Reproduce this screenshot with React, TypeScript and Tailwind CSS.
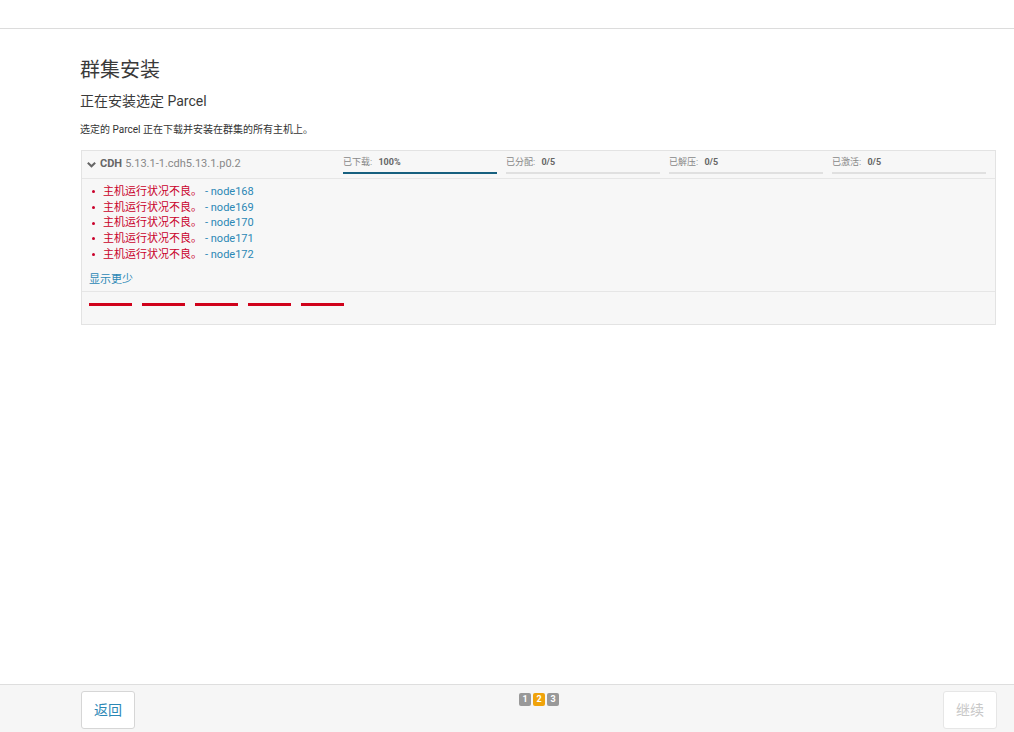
import React from 'react'

const font = { fontFamily: 'Roboto, "Noto Sans CJK SC", sans-serif' }

const hosts = ['node168', 'node169', 'node170', 'node171', 'node172']

const stages = [
  { label: '已下载:', value: '100%', done: true },
  { label: '已分配:', value: '0/5', done: false },
  { label: '已解压:', value: '0/5', done: false },
  { label: '已激活:', value: '0/5', done: false },
]

export default function App() {
  return (
    <div className="w-[1014px] h-[732px] bg-white flex flex-col text-[#333]" style={font}>
      <div className="h-[29px] border-b border-[#dcdcdc] shrink-0" />

      <main className="flex-1 pl-[80px] pr-[18px] pt-[28px]">
        <h1 className="text-[20px] leading-[26px] text-[#3a3a3a]">群集安装</h1>
        <h2 className="text-[14px] leading-[20px] mt-[8px] text-[#3a3a3a]">正在安装选定 Parcel</h2>
        <p className="text-[10px] leading-[14px] mt-[12px] text-[#333]">
          选定的 Parcel 正在下载并安装在群集的所有主机上。
        </p>

        <div className="mt-[13px] ml-px border border-[#e3e3e3] bg-[#f7f7f7]">
          <div className="flex items-center h-[28px] border-b border-[#e6e6e6] pl-[4px] pr-[9px]">
            <div className="w-[257px] flex items-center text-[11px] text-[#777]">
              <svg width="11" height="11" viewBox="0 0 12 12" className="mr-[3px]">
                <path d="M2 4 L6 8 L10 4" stroke="#666" strokeWidth="2.2" fill="none" />
              </svg>
              <span className="font-bold text-[#666]">CDH</span>
              <span className="ml-[3px] text-[#888]">5.13.1-1.cdh5.13.1.p0.2</span>
            </div>
            <div className="flex-1 flex gap-[9px]">
              {stages.map((s) => (
                <div key={s.label} className="w-[154px] flex flex-col">
                  <div className="text-[9px] leading-[12px] text-[#888] pt-[1px]">
                    {s.label} <span className="font-bold text-[#666] ml-[4px]">{s.value}</span>
                  </div>
                  <div
                    className={
                      s.done
                        ? 'mt-[4px] h-[2px] bg-[#17607f]'
                        : 'mt-[4px] h-[2px] bg-[#e0e0e0]'
                    }
                  />
                </div>
              ))}
            </div>
          </div>

          <div className="pl-[7px] pt-[5px] pb-[4px] border-b border-[#e6e6e6]">
            <ul className="text-[11px] leading-[15.7px]">
              {hosts.map((h) => (
                <li key={h} className="flex items-center">
                  <span className="w-[3px] h-[3px] rounded-full bg-[#c9002a] ml-[3px] mr-[8px]" />
                  <span className="text-[#c9002a]">主机运行状况不良。</span>
                  <span className="ml-[3px] text-[#2b87b5]">- {h}</span>
                </li>
              ))}
            </ul>
            <div className="mt-[10px] text-[11px] leading-[14px] text-[#2b87b5]">显示更少</div>
          </div>

          <div className="h-[32px] flex items-start pt-[11px] pl-[7px] gap-[10px]">
            {[0, 1, 2, 3, 4].map((i) => (
              <div key={i} className="w-[43px] h-[3px] bg-[#d0021b]" />
            ))}
          </div>
        </div>
      </main>

      <footer className="h-[48px] shrink-0 border-t border-[#dedede] bg-[#f6f6f6] flex items-start justify-between pl-[81px] pr-[17px] pt-[6px] relative">
        <button className="w-[54px] h-[38px] border border-[#d6d6d6] rounded-[3px] bg-white text-[#2b87b5] text-[14px]">
          返回
        </button>
        <div className="flex gap-[2px] pt-[2px]">
          <span className="w-[12px] h-[13px] rounded-[2px] bg-[#999] text-white text-[9px] font-bold flex items-center justify-center">1</span>
          <span className="w-[12px] h-[13px] rounded-[2px] bg-[#f0a30a] text-white text-[9px] font-bold flex items-center justify-center">2</span>
          <span className="w-[12px] h-[13px] rounded-[2px] bg-[#999] text-white text-[9px] font-bold flex items-center justify-center">3</span>
        </div>
        <button className="w-[54px] h-[38px] border border-[#e6e6e6] rounded-[3px] bg-white text-[#c8c8c8] text-[14px]">
          继续
        </button>
      </footer>
    </div>
  )
}
